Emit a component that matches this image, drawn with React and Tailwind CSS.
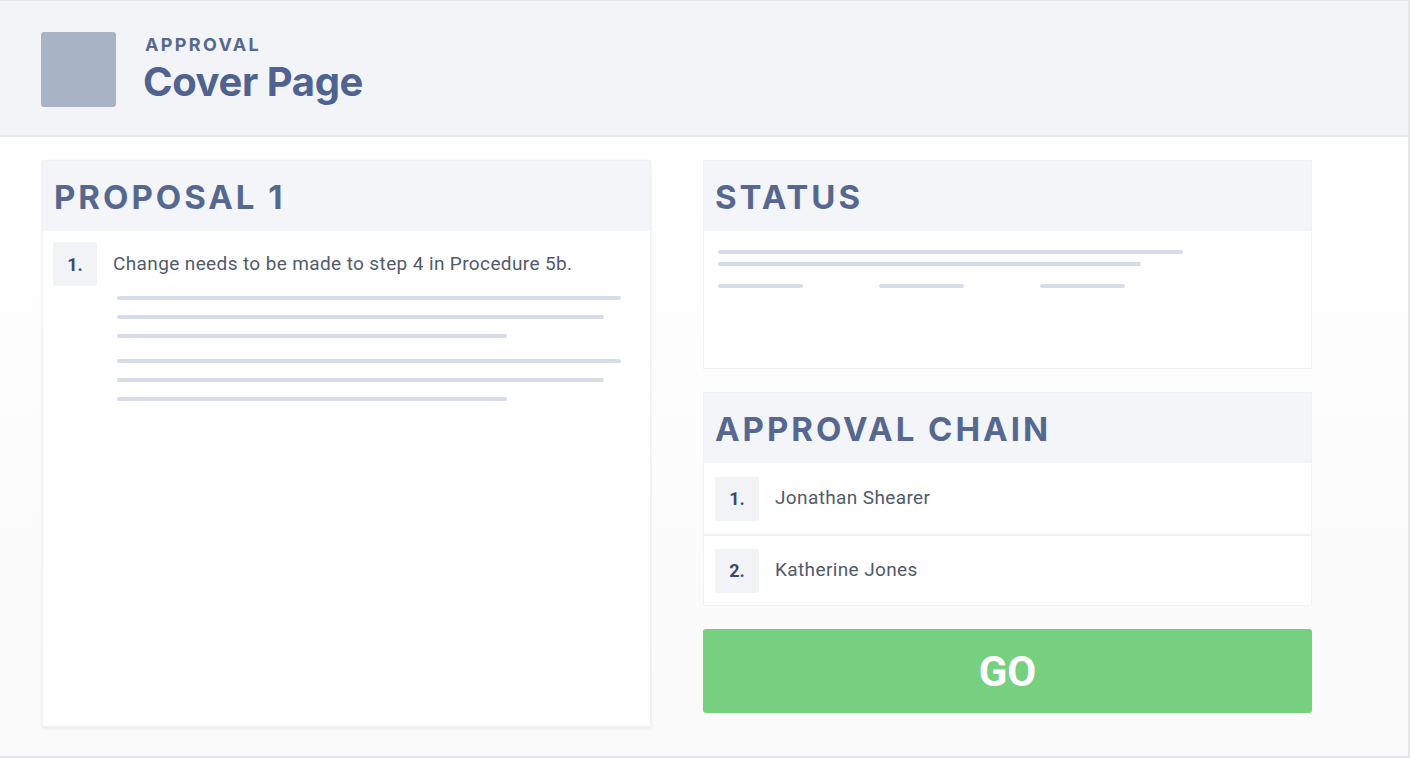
import React from 'react';

const heading = "font-['Inter',sans-serif] font-bold text-[#56688f] tracking-[0.09em]";
const body = "font-['Roboto',sans-serif] text-[#515a6b] text-[19px] tracking-[0.02em]";

const Line = ({ w, className = '' }) => (
  <div className={`h-[4px] rounded-full bg-[#d6dce8] ${className}`} style={{ width: w }} />
);

const Badge = ({ n }) => (
  <div className="w-[44px] h-[44px] shrink-0 rounded-[2px] bg-[#f1f3f7] flex items-center justify-center font-['Roboto',sans-serif] font-bold text-[18px] text-[#3a4a6e]">
    {n}.
  </div>
);

const CardHeader = ({ title }) => (
  <div className="h-[70px] bg-[#f3f5f9] flex items-center px-[11px] pt-[3px]">
    <h2 className={`${heading} text-[33px] leading-none`}>{title}</h2>
  </div>
);

const approvers = ['Jonathan Shearer', 'Katherine Jones'];

export default function App() {
  return (
    <div className="w-[1410px] h-[758px] overflow-hidden bg-white border-t border-r-2 border-b-2 border-[#e6e6e8] flex flex-col">
      {/* header */}
      <header className="h-[136px] shrink-0 bg-[#f3f4f8] border-b-2 border-[#e9eaee] flex items-center pl-[41px] pt-[2px]">
        <div className="w-[75px] h-[75px] rounded-[3px] bg-[#a8b4c6]" />
        <div className="ml-[27px] flex flex-col">
          <span className={`font-['Inter',sans-serif] font-bold text-[#56688f] text-[18px] tracking-[0.13em] leading-none ml-[2px]`}>
            APPROVAL
          </span>
          <span className="font-['Inter',sans-serif] font-bold text-[40px] leading-none mt-[8px] text-[#4f6290] tracking-[-0.01em]">
            Cover Page
          </span>
        </div>
      </header>

      <main className="flex-1 bg-gradient-to-b from-white to-[#fafafa] flex items-start gap-[52px] pl-[42px] pt-[23px]">
        {/* proposal */}
        <section className="w-[609px] h-[567px] bg-white border border-[#f0f1f3] shadow-[0_1px_3px_rgba(0,0,0,0.08)]">
          <CardHeader title="PROPOSAL 1" />
          <div className="pt-[11px] pl-[10px]">
            <div className="flex items-center gap-[16px]">
              <Badge n={1} />
              <p className={body}>Change needs to be made to step 4 in Procedure 5b.</p>
            </div>
            <div className="pl-[64px] mt-[10px] flex flex-col gap-[15px]">
              <Line w={504} />
              <Line w={487} />
              <Line w={390} />
              <Line w={504} className="mt-[6px]" />
              <Line w={487} />
              <Line w={390} />
            </div>
          </div>
        </section>

        <div className="w-[609px] flex flex-col">
          {/* status */}
          <section className="h-[209px] bg-white border border-[#f0f1f3]">
            <CardHeader title="STATUS" />
            <div className="pt-[19px] pl-[14px] flex flex-col">
              <Line w={465} />
              <Line w={423} className="mt-[8px]" />
              <div className="flex gap-[76px] mt-[18px]">
                <Line w={85} />
                <Line w={85} />
                <Line w={85} />
              </div>
            </div>
          </section>

          {/* approval chain */}
          <section className="mt-[23px] bg-white border border-[#f0f1f3]">
            <CardHeader title="APPROVAL CHAIN" />
            {approvers.map((name, i) => (
              <div
                key={name}
                className={`h-[71px] flex items-center pl-[11px] gap-[16px] ${i > 0 ? 'border-t-2 border-[#f1f2f5]' : ''}`}
              >
                <Badge n={i + 1} />
                <span className={body}>{name}</span>
              </div>
            ))}
          </section>

          <button className="mt-[23px] h-[84px] rounded-[3px] bg-[#77cf80] text-white font-['Roboto',sans-serif] font-bold text-[42px] leading-none pt-[2px]">
            GO
          </button>
        </div>
      </main>
    </div>
  );
}
